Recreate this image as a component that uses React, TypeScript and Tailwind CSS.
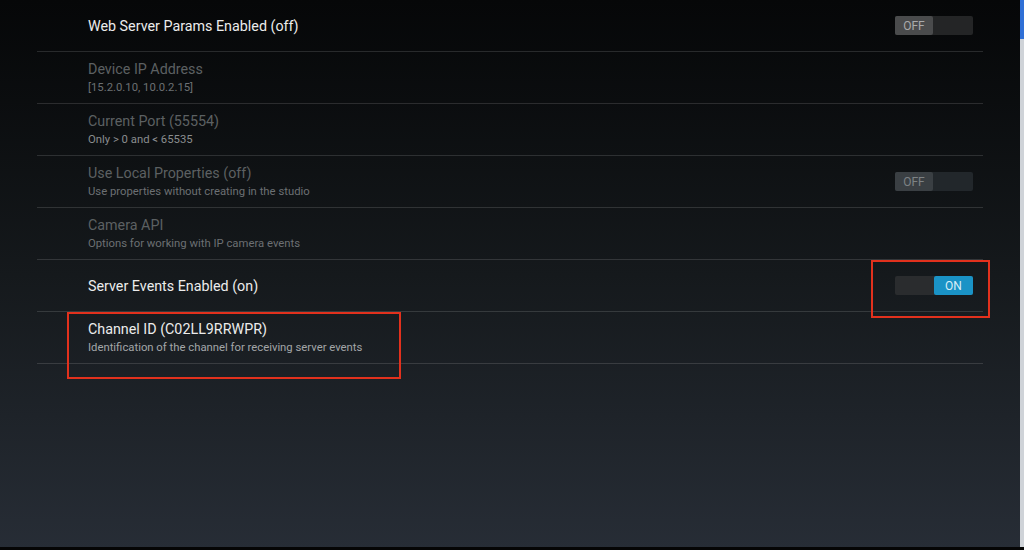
import React from 'react';

type Row = {
  title: string;
  subtitle?: string;
  enabled: boolean;
  toggle?: 'on' | 'off';
  brightSub?: boolean;
};

const rows: Row[] = [
  { title: 'Web Server Params Enabled (off)', enabled: true, toggle: 'off' },
  { title: 'Device IP Address', subtitle: '[15.2.0.10, 10.0.2.15]', enabled: false },
  { title: 'Current Port (55554)', subtitle: 'Only > 0 and < 65535', enabled: false, brightSub: true },
  { title: 'Use Local Properties (off)', subtitle: 'Use properties without creating in the studio', enabled: false, toggle: 'off' },
  { title: 'Camera API', subtitle: 'Options for working with IP camera events', enabled: false },
  { title: 'Server Events Enabled (on)', enabled: true, toggle: 'on' },
  { title: 'Channel ID (C02LL9RRWPR)', subtitle: 'Identification of the channel for receiving server events', enabled: true },
];

function Toggle({ on, dim }: { on: boolean; dim?: boolean }) {
  if (on) {
    return (
      <div className="flex h-[19px] w-[78px] rounded-[2px] bg-[#2a2c2e]">
        <div className="w-[39px]" />
        <div className="flex w-[39px] items-center justify-center rounded-[2px] bg-[#1a93c6] text-[12px] text-[#d9eef7]">ON</div>
      </div>
    );
  }
  return (
    <div className={`flex h-[19px] w-[78px] rounded-[2px] ${dim ? 'bg-[#22272b]' : 'bg-[#242526]'}`}>
      <div className={`flex w-[38px] items-center justify-center rounded-[2px] text-[12px] ${dim ? 'bg-[#3a3f43] text-[#7d8285]' : 'bg-[#4a4b4c] text-[#a9aaab]'}`}>
        OFF
      </div>
    </div>
  );
}

export default function App() {
  return (
    <div
      className="relative h-[550px] w-[1024px] overflow-hidden bg-gradient-to-b from-[#060708] via-[#15191c] to-[#272d36]"
      style={{ fontFamily: 'Roboto, "Noto Sans", sans-serif' }}
    >
      {/* settings list */}
      <div className="ml-[37px] flex w-[946px] flex-col">
        {rows.map((r) => (
          <div key={r.title} className="flex h-[52px] items-center border-b border-white/[0.13] pl-[51px] pr-[10px]">
            <div className="flex flex-1 flex-col">
              <div className={`text-[14.3px] leading-[18px] ${r.enabled ? 'text-[#ececec]' : 'text-[#5c6062]'}`}>{r.title}</div>
              {r.subtitle && (
                <div
                  className={`mt-[2px] text-[11.3px] leading-[16px] ${
                    r.enabled ? 'text-[#a3a6a8]' : r.brightSub ? 'text-[#8a8d8f]' : 'text-[#6c7073]'
                  }`}
                >
                  {r.subtitle}
                </div>
              )}
            </div>
            {r.toggle && <Toggle on={r.toggle === 'on'} dim={!r.enabled} />}
          </div>
        ))}
      </div>

      {/* red annotation boxes */}
      <div className="absolute left-[871px] top-[260px] h-[58px] w-[119px] border-2 border-[#e2311d]" />
      <div className="absolute left-[67px] top-[312px] h-[67px] w-[334px] border-2 border-[#e2311d]" />

      {/* right edge strip */}
      <div className="absolute right-0 top-0 flex h-[547px] w-[4px] flex-col bg-[#cfd3d8]">
        <div className="h-[39px] bg-[#2f6fd6]" />
      </div>
      {/* bottom edge */}
      <div className="absolute bottom-0 left-0 h-[3px] w-full bg-[#050505]" />
    </div>
  );
}
